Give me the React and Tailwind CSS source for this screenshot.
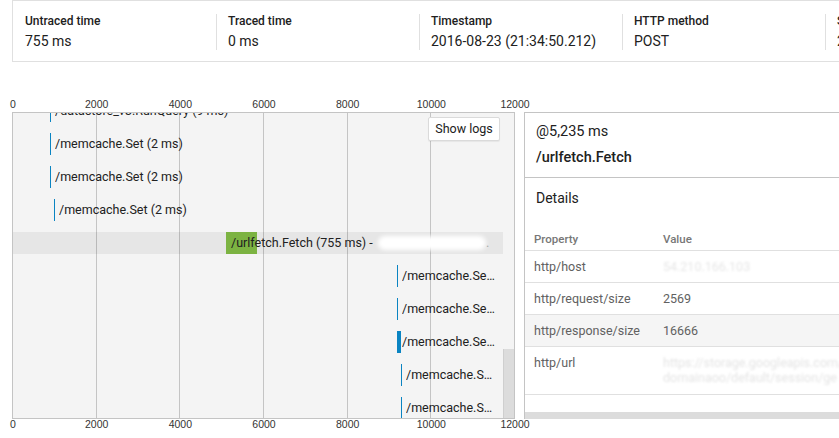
import React from 'react';

const summary = [
  { label: 'Untraced time', value: '755 ms' },
  { label: 'Traced time', value: '0 ms' },
  { label: 'Timestamp', value: '2016-08-23 (21:34:50.212)' },
  { label: 'HTTP method', value: 'POST' },
  { label: 'Status', value: '200' },
];

const ticks = [0, 2000, 4000, 6000, 8000, 10000, 12000];
const PX_PER_MS = 502 / 12000;

// x/w are pixel offsets inside the chart area
const spans = [
  { name: '/datastore_v3.RunQuery (9 ms)', x: 37, w: 1 },
  { name: '/memcache.Set (2 ms)', x: 37, w: 1 },
  { name: '/memcache.Set (2 ms)', x: 37, w: 1 },
  { name: '/memcache.Set (2 ms)', x: 41, w: 1 },
  { name: '/urlfetch.Fetch (755 ms) - ', x: 213, w: 31, selected: true },
  { name: '/memcache.Set (2 ms)', x: 384, w: 1 },
  { name: '/memcache.Set (2 ms)', x: 384, w: 1 },
  { name: '/memcache.Set (8 ms)', x: 384, w: 4 },
  { name: '/memcache.Set (2 ms)', x: 388, w: 1 },
  { name: '/memcache.Set (2 ms)', x: 388, w: 1 },
];

const props = [
  { key: 'http/host', value: '54.210.166.103', blurred: true },
  { key: 'http/request/size', value: '2569' },
  { key: 'http/response/size', value: '16666', shaded: true },
  { key: 'http/url', blurred: true, multi: true },
];

const Axis = () => (
  <div className="relative h-[11px] w-[503px] font-['Liberation_Sans',sans-serif] text-[10.5px] leading-[11px] text-[#333]">
    {ticks.map((t) => (
      <span
        key={t}
        className="absolute top-0 -translate-x-1/2"
        style={{ left: 1 + t * PX_PER_MS }}
      >
        {t}
      </span>
    ))}
  </div>
);

export default function App() {
  return (
    <div className="w-[839px] h-[438px] overflow-hidden bg-white font-['Roboto',sans-serif] text-[#212121]">
      {/* Summary strip */}
      <div className="ml-[12px] w-[1040px] border border-[#e0e0e0] pt-[13px] pb-[11px] flex">
        {summary.map((s, i) => (
          <div
            key={s.label}
            className={`w-[203px] shrink-0 h-[36px] px-3 ${i > 0 ? 'border-l border-[#e0e0e0] pl-[11px]' : ''}`}
          >
            <div className="text-[12px] leading-[14px] font-medium text-[#212121]">{s.label}</div>
            <div className="mt-[5px] text-[14px] leading-[16px] text-[#212121]">{s.value}</div>
          </div>
        ))}
      </div>

      <div className="ml-[12px] mt-[37px]">
        <Axis />
        <div className="mt-[2px] flex">
          {/* Timeline chart */}
          <div className="relative w-[503px] h-[307px] border border-[#c4c4c4] bg-[#f4f4f4] flex">
            <div className="relative flex-1 overflow-hidden">
              {[1, 2, 3, 4, 5].map((k) => (
                <div
                  key={k}
                  className="absolute top-0 bottom-0 w-px bg-[#c4c4c4]"
                  style={{ left: k * 2000 * PX_PER_MS - 1 }}
                />
              ))}
              <div className="relative -mt-[13px]">
                {spans.map((s, i) => (
                  <div
                    key={i}
                    className={`relative h-[22px] mb-[11px] flex items-center ${s.selected ? 'bg-black/[0.055]' : ''}`}
                  >
                    <div
                      className={`absolute top-0 bottom-0 ${s.selected ? 'bg-[#7cb342]' : 'bg-[#0a84c2]'}`}
                      style={{ left: s.x, width: s.w }}
                    />
                    <span
                      className="relative flex items-center min-w-0 pr-[7px] text-[12.5px] leading-[16px] text-[#212121]"
                      style={{ paddingLeft: s.x + 5 }}
                    >
                      <span className="truncate whitespace-pre">{s.name}</span>
                      {s.selected && (
                        <>
                          <span className="shrink-0 ml-[2px] h-[14px] w-[108px] rounded-full bg-white blur-[2px]" />
                          <span className="shrink-0 text-[#9e9e9e]">.</span>
                        </>
                      )}
                    </span>
                  </div>
                ))}
              </div>
            </div>
            {/* scrollbar */}
            <div className="w-[11px] flex flex-col">
              <div className="mt-auto h-[69px] bg-[#dcdcdc] border-l border-[#cfcfcf]" />
            </div>
            <button className="absolute top-[4px] right-[14px] h-[24px] w-[72px] rounded-[2px] border border-[#dadada] bg-white text-[12.5px] text-[#212121] shadow-[0_1px_1px_rgba(0,0,0,0.06)]">
              Show logs
            </button>
          </div>

          {/* Span details panel */}
          <div className="ml-[9px] w-[400px] h-[307px] border-l border-t border-[#c4c4c4] bg-white flex flex-col">
            <div className="pl-[11px] pt-[9px] pb-[9px] border-b border-[#c4c4c4]">
              <div className="text-[14.5px] leading-[20px] text-[#212121]">@5,235 ms</div>
              <div className="mt-[6px] text-[14.5px] leading-[20px] font-medium text-[#212121]">/urlfetch.Fetch</div>
            </div>
            <div className="pl-[11px] pt-[10px] text-[14px] leading-[20px] text-[#212121]">Details</div>
            <div className="flex-1 mt-[19px]">
              <div className="flex h-[24px] items-start pt-[4px] pl-[9px] border-b border-[#e0e0e0] text-[11.5px] leading-[16px] font-medium text-[#777]">
                <span className="w-[129px]">Property</span>
                <span>Value</span>
              </div>
              {props.map((p) => (
                <div
                  key={p.key}
                  className={`flex pl-[9px] border-b border-[#e0e0e0] text-[12.5px] text-[#616161] ${p.multi ? 'h-[48px] pt-[8px]' : 'h-[32px] items-center'} ${p.shaded ? 'bg-[#f5f5f5]' : ''}`}
                >
                  <span className="w-[129px] shrink-0 leading-[16px]">{p.key}</span>
                  {p.multi ? (
                    <div className="flex flex-col leading-[15px] text-[#e4e4e4] blur-[1px] whitespace-nowrap">
                      <span>https://storage.googleapis.com/s</span>
                      <span>domainaoo/default/session/ge</span>
                    </div>
                  ) : (
                    <span className={`leading-[16px] ${p.blurred ? 'text-[#e6e6e6] blur-[1px]' : ''}`}>{p.value}</span>
                  )}
                </div>
              ))}
            </div>
            <div className="h-[7px] bg-[#dcdcdc]" />
          </div>
        </div>
        <Axis />
      </div>
    </div>
  );
}
